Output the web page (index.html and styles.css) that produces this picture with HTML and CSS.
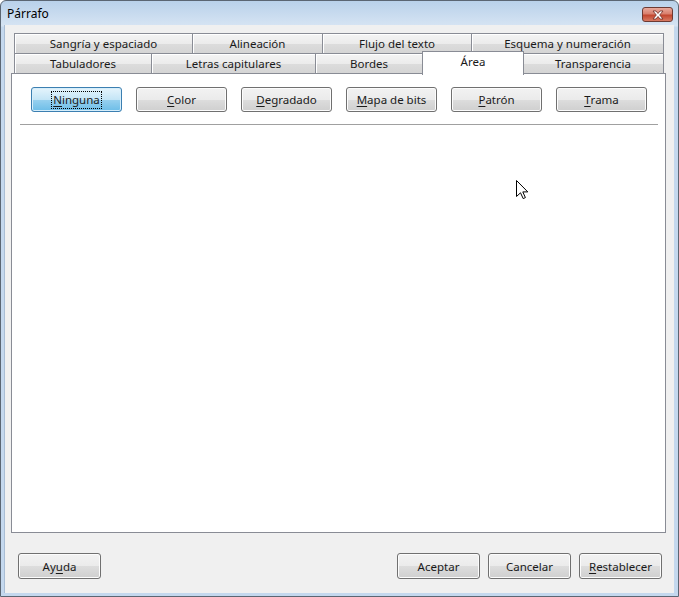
FILE: index.html
```html
<!DOCTYPE html>
<html lang="es">
<head>
    <meta charset="UTF-8" />
    <title>Párrafo</title>
    <link rel="stylesheet" href="styles.css">
</head>
<body>
    <div class="window">
        <!-- Title bar -->
        <div class="titlebar">
            <span class="title">Párrafo</span>
            <div class="close-btn">
                <svg width="14" height="10" viewBox="0 0 14 10">
                    <path d="M2 1 L5 1 L7 3.5 L9 1 L12 1 L8.7 5 L12 9 L9 9 L7 6.5 L5 9 L2 9 L5.3 5 Z"
                        fill="#fff" stroke="#6d2a22" stroke-width="0.8" />
                </svg>
            </div>
        </div>

        <div class="client">
            <!-- Tabs -->
            <div class="tabs">
                <div class="tab-row row-back">
                    <div class="tab">Sangría y espaciado</div>
                    <div class="tab">Alineación</div>
                    <div class="tab">Flujo del texto</div>
                    <div class="tab tab-last">Esquema y numeración</div>
                </div>
                <div class="tab-row row-front">
                    <div class="tab">Tabuladores</div>
                    <div class="tab">Letras capitulares</div>
                    <div class="tab">Bordes</div>
                    <div class="tab tab-active">Área</div>
                    <div class="tab tab-last">Transparencia</div>
                </div>
            </div>

            <!-- Tab page -->
            <div class="panel">
                <div class="fill-types">
                    <button class="btn btn-focus"><span class="focus-ring"><u>N</u>inguna</span></button>
                    <button class="btn"><u>C</u>olor</button>
                    <button class="btn"><u>D</u>egradado</button>
                    <button class="btn"><u>M</u>apa de bits</button>
                    <button class="btn"><u>P</u>atrón</button>
                    <button class="btn"><u>T</u>rama</button>
                </div>
                <div class="separator"></div>

                <svg class="cursor" width="13" height="20" viewBox="0 0 13 20">
                    <path d="M0.5 0.5 L0.5 16.5 L4.5 12.8 L7.2 18.6 L9.4 17.6 L6.8 11.9 L11.8 11.9 Z"
                        fill="#fff" stroke="#000" stroke-width="1" stroke-linejoin="miter" />
                </svg>
            </div>

            <!-- Dialog buttons -->
            <div class="dialog-buttons">
                <button class="btn btn-dialog">Ay<u>u</u>da</button>
                <div class="spacer"></div>
                <button class="btn btn-dialog">Aceptar</button>
                <button class="btn btn-dialog">Cancelar</button>
                <button class="btn btn-dialog"><u>R</u>establecer</button>
            </div>
        </div>
    </div>
</body>
</html>
```

FILE: styles.css
```css
body {
    margin: 0;
    padding: 0;
    background: #fff;
    font-family: "Noto Sans", "Open Sans", sans-serif;
    font-size: 11.5px;
    color: #1a1a1a;
}

.window {
    width: 679px;
    height: 597px;
    box-sizing: border-box;
    border: 1px solid #5b6673;
    border-radius: 6px 6px 0 0;
    background: linear-gradient(#b9d1ea 0px, #d6e4f3 25px, #c4d8ee 26px, #c4d8ee 100%);
    padding: 0 4px 3px 3px;
    display: flex;
    flex-direction: column;
}

/* --- title bar --- */
.titlebar {
    height: 24px;
    display: flex;
    align-items: flex-start;
    justify-content: space-between;
}

.title {
    line-height: 25px;
    padding-left: 3px;
    color: #000;
    font-size: 12px;
}

.close-btn {
    width: 31px;
    height: 15px;
    margin-top: 6px;
    margin-right: 1px;
    box-sizing: border-box;
    border: 1px solid #6d3a33;
    border-radius: 3px;
    background: linear-gradient(#e9a99c 0%, #d97f6d 45%, #c2462f 55%, #d87a63 100%);
    display: flex;
    align-items: center;
    justify-content: center;
}

/* --- client area --- */
.client {
    flex: 1;
    background: #f0f0f0;
    border-left: 1px solid #a9bdd4;
    padding: 8px 8px 0 6px;
    display: flex;
    flex-direction: column;
}

.tabs {
    margin-left: 3px;
    width: 650px;
}

.tab-row {
    display: grid;
    height: 20px;
}

.row-back {
    grid-template-columns: 178px 130px 149px 193px;
}

.row-front {
    grid-template-columns: 137px 164px 107px 101px 141px;
}

.tab {
    box-sizing: border-box;
    border-top: 1px solid #898c95;
    border-left: 1px solid #898c95;
    background: linear-gradient(#f4f4f4 0%, #ebebeb 50%, #dcdcdc 51%, #d4d4d4 100%);
    box-shadow: inset 1px 1px 0 #fff;
    text-align: center;
    line-height: 20px;
    white-space: nowrap;
}

.tab-last {
    border-right: 1px solid #898c95;
}

.tab-active {
    background: #fff;
    box-shadow: none;
    border-right: 1px solid #898c95;
    margin-top: -2px;
    margin-bottom: -1px;
    margin-right: -1px;
    line-height: 19px;
    position: relative;
    z-index: 1;
}

.tab-active + .tab {
    border-left: none;
}

/* --- tab page --- */
.panel {
    position: relative;
    flex: 1;
    background: #fff;
    border: 1px solid #898c95;
    padding: 13px 7px 0 8px;
}

.fill-types {
    display: flex;
    gap: 14px;
    padding-left: 11px;
}

.separator {
    margin-top: 12px;
    height: 1px;
    background: #a0a0a0;
}

.cursor {
    position: absolute;
    left: 504px;
    top: 106px;
}

/* --- buttons --- */
.btn {
    font-family: "Noto Sans", "Open Sans", sans-serif;
    font-size: 11.5px;
    color: #1a1a1a;
    width: 91px;
    height: 25px;
    padding: 0;
    box-sizing: border-box;
    border: 1px solid #707070;
    border-radius: 3px;
    background: linear-gradient(#f2f2f2 0%, #ebebeb 50%, #dddddd 51%, #cfcfcf 100%);
    box-shadow: inset 0 0 0 1px #fcfcfc;
    display: flex;
    align-items: center;
    justify-content: center;
}

.btn u {
    text-underline-offset: 2px;
}

.btn-focus {
    border-color: #3c7fb1;
    background: linear-gradient(#e5f4fc 0%, #c4e5f6 50%, #98d1ef 51%, #6cbde8 100%);
    box-shadow: inset 0 0 0 1px #d6eefb;
}

.focus-ring {
    outline: 1px dotted #000;
    padding: 0 1px;
    line-height: 16px;
}

.dialog-buttons {
    display: flex;
    gap: 8px;
    margin-top: 20px;
    padding: 0 4px 14px 7px;
}

.spacer {
    flex: 1;
}

.btn-dialog {
    width: 83px;
    height: 26px;
}
```
